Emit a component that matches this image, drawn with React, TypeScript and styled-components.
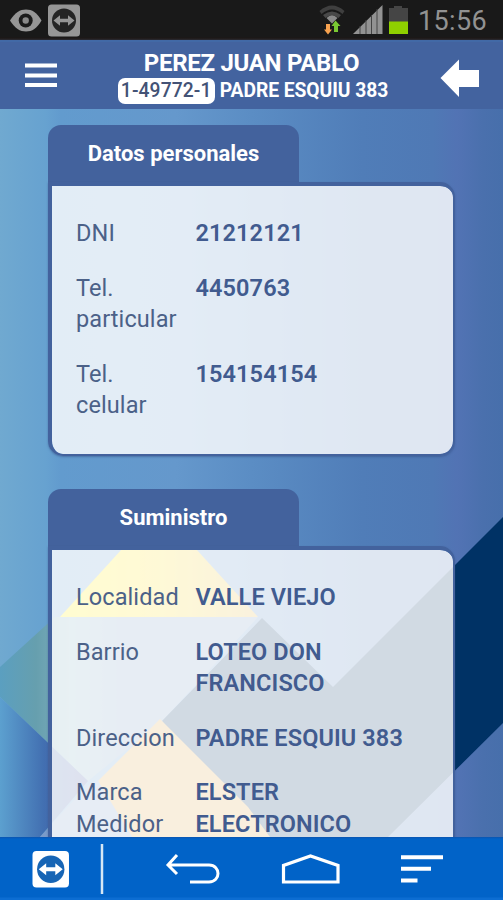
import React from "react";
import styled, { createGlobalStyle } from "styled-components";

const GlobalStyle = createGlobalStyle`
  * { box-sizing: border-box; }
  body { margin: 0; background: #5b8cc4; font-family: Roboto, "Noto Sans", sans-serif; }
`;

const Screen = styled.div`
  width: 503px;
  height: 900px;
  display: flex;
  flex-direction: column;
  overflow: hidden;
`;

const StatusBar = styled.div`
  flex: none;
  height: 40px;
  background: linear-gradient(#191919 0 37px, #1d1715 38px, #2b2c35 40px);
  display: flex;
  align-items: flex-start;
  justify-content: space-between;
`;

const StatusGroup = styled.div<{ $gap?: number }>`
  display: flex;
  align-items: flex-start;
  gap: ${(p) => p.$gap ?? 0}px;
  svg { display: block; }
`;

const Clock = styled.span`
  width: 85px;
  font-size: 27px;
  line-height: 42px;
  letter-spacing: 0.35px;
  color: #929292;
`;

const Header = styled.header`
  flex: none;
  height: 69px;
  background: #43639f;
  border-top: 2px solid #4269a6;
  display: grid;
  grid-template-columns: 100px 1fr 100px;
`;

const IconButton = styled.button<{ $pad: string }>`
  border: 0;
  background: none;
  padding: ${(p) => p.$pad};
  display: flex;
  align-items: flex-start;
`;

const Heading = styled.div`
  display: flex;
  flex-direction: column;
  align-items: center;
  padding-top: 7px;
  color: #fff;
  font-weight: 700;
  white-space: nowrap;
`;

const UserName = styled.div`
  font-size: 24px;
  line-height: 29px;
  letter-spacing: -0.3px;
`;

const Supply = styled.div`
  display: flex;
  align-items: center;
  gap: 5px;
  font-size: 19.3px;
  line-height: 26px;
  margin-left: 3px;
`;

const SupplyNumber = styled.span`
  height: 26px;
  width: 97px;
  border-radius: 7px;
  background: #fff;
  color: #435275;
  font-weight: 500;
  letter-spacing: 0.1px;
  text-align: center;
`;

const Address = styled.span`
  height: 26px;
  letter-spacing: -0.05px;
`;

const Content = styled.main`
  flex: 1;
  min-height: 0;
  position: relative;
  overflow: hidden;
  padding: 16px 48px 0;
`;

const Backdrop = styled.svg`
  position: absolute;
  inset: 0;
  z-index: -1;
`;

const Card = styled.section`
  width: 407px;
  margin-bottom: 33px;
`;

const Tab = styled.h2`
  margin: 0;
  width: 251px;
  height: 57px;
  border-radius: 13px 13px 0 0;
  background: #43629d;
  color: #fff;
  font-size: 22px;
  font-weight: 700;
  line-height: 57px;
  text-align: center;
`;

const Panel = styled.div<{ $height: number }>`
  height: ${(p) => p.$height}px;
  border: solid #43629d;
  border-width: 4px 2px 2px 4px;
  border-radius: 0 15px 15px 15px;
  background: rgba(255, 255, 255, 0.82);
  background-clip: padding-box;
  box-shadow: 0 1px 2px rgba(50, 75, 130, 0.5);
  padding: 32px 20px 0 24px;
  display: flex;
  flex-direction: column;
  gap: 23px;
`;

const Row = styled.div`
  display: grid;
  grid-template-columns: 119.5px 1fr;
  font-size: 23.5px;
  line-height: 31.6px;
  letter-spacing: 0.1px;
  color: #4b6188;
`;

const Label = styled.div`
  padding-right: 14px;
`;

const Value = styled.div`
  font-weight: 600;
  color: #415b8f;
  white-space: pre-line;
`;

const NavBar = styled.nav`
  flex: none;
  height: 63px;
  background: linear-gradient(#0b55b0 0, #0163c8 2px 60px, #0c6dd2 61px);
  svg { display: block; }
`;

const Eye = () => (
  <svg width="42" height="40" viewBox="0 0 42 40">
    <path d="M10 20.500C15 12.500 20 9.500 26 9.500S37 12.500 41.500 20.500C37 28.500 32 31.500 26 31.500S15 28.500 10 20.500Z" fill="#969696" />
    <circle cx="25.700" cy="20.500" r="7" fill="#1b1b1b" />
    <circle cx="25.700" cy="20.500" r="3.200" fill="#8a8a8a" />
  </svg>
);

const RemoteIcon = ({ box, disc }: { box: string; disc: string }) => (
  <g>
    <rect width="32" height="32" rx="3.500" fill={box} />
    <circle cx="16" cy="16" r="12" fill={disc} />
    <path d="M5.500 16L12 10.800V14.300H20V10.800L26.500 16L20 21.200V17.700H12V21.200Z" fill={box} />
  </g>
);

const Wifi = () => (
  <svg width="32" height="40" viewBox="0 0 32 40">
    <path d="M2.500 11Q15 0 27.500 11L25.500 14Q15 5 4.500 14Z" fill="#3f3f3f" />
    <path d="M6 15Q15 8 24 15L21.500 18Q15 12.500 8.500 18Z" fill="#484848" />
    <path d="M9.500 18Q15 12.500 20.500 18L15 23.500Z" fill="#8a8a8a" />
    <path d="M9 24h4v5.500h2L11 34.500L7 29.500h2Z" fill="#f7a24f" />
    <path d="M17 32h4V26h2.500L18.500 20.500L14.500 26H17Z" fill="#79c832" />
  </svg>
);

const Signal = () => (
  <svg width="32" height="40" viewBox="0 0 32 40">
    <path d="M0 34L29.500 5V34Z" fill="#929292" />
    <path d="M7 26V34M13 20V34M18.500 15V34M24 9V34" stroke="#444" strokeWidth="1" />
  </svg>
);

const Battery = () => (
  <svg width="25" height="40" viewBox="0 0 25 40">
    <path d="M0 8h5V6h8v2h6v14H0Z" fill="#454545" />
    <rect y="21.500" width="19" height="12.500" fill="#8fd000" />
  </svg>
);

const BackgroundArt = () => (
  <Backdrop width="503" height="728" viewBox="0 109 503 728" preserveAspectRatio="none">
    <defs>
      <linearGradient id="sky">
        <stop offset="0" stopColor="#70a9d0" />
        <stop offset=".09" stopColor="#67a2d0" />
        <stop offset=".12" stopColor="#629bce" />
        <stop offset=".35" stopColor="#6598cc" />
        <stop offset=".5" stopColor="#5b8dc4" />
        <stop offset=".72" stopColor="#507db8" />
        <stop offset=".86" stopColor="#4f79b5" />
        <stop offset=".91" stopColor="#5273b4" />
        <stop offset=".96" stopColor="#4a70ad" />
        <stop offset="1" stopColor="#476fab" />
      </linearGradient>
      <linearGradient id="leaf" gradientUnits="userSpaceOnUse" x1="0" y1="0" x2="120" y2="0">
        <stop offset="0" stopColor="#5b9fc0" />
        <stop offset=".3" stopColor="#669fae" />
        <stop offset=".6" stopColor="#82b0c0" />
        <stop offset="1" stopColor="#7b9cc0" />
      </linearGradient>
      <linearGradient id="dusk" gradientUnits="userSpaceOnUse" x1="0" y1="0" x2="88" y2="0">
        <stop offset="0" stopColor="#5ca0cf" />
        <stop offset=".5" stopColor="#426fb1" />
        <stop offset="1" stopColor="#4a5da5" />
      </linearGradient>
      <linearGradient id="sun" x1="0" x2="1">
        <stop offset="0" stopColor="#fff000" />
        <stop offset=".5" stopColor="#fadc20" />
        <stop offset="1" stopColor="#dfb448" />
      </linearGradient>
    </defs>
    <rect y="109" width="503" height="728" fill="url(#sky)" />
    <path d="M0 667L55 617H258L162 721L88 781L0 697Z" fill="url(#leaf)" />
    <path d="M0 697L88 781L40 837H0Z" fill="url(#dusk)" />
    <path d="M60 617L122 549L148 525L196 549L258 617Z" fill="url(#sun)" />
    <path d="M503 517L333 687L262 618L162 721L255 837H388L503 723Z" fill="#003265" />
    <path d="M160 719L98 781L132 837H270L248 807Z" fill="#dfa548" />
    <path d="M40 837L88 785L98 781L132 837Z" fill="#7b9bc9" />
  </Backdrop>
);

const personal = [
  ["DNI", "21212121"],
  ["Tel. particular", "4450763"],
  ["Tel. celular", "154154154"],
];

const supply = [
  ["Localidad", "VALLE VIEJO"],
  ["Barrio", "LOTEO DON\nFRANCISCO"],
  ["Direccion", "PADRE ESQUIU 383"],
  ["Marca Medidor", "ELSTER\nELECTRONICO"],
];

const InfoCard = ({ title, rows, height }: { title: string; rows: string[][]; height: number }) => (
  <Card>
    <Tab>{title}</Tab>
    <Panel $height={height}>
      {rows.map(([label, value]) => (
        <Row key={label}>
          <Label>{label}</Label>
          <Value>{value}</Value>
        </Row>
      ))}
    </Panel>
  </Card>
);

export default function App() {
  return (
    <>
      <GlobalStyle />
      <Screen>
        <StatusBar>
          <StatusGroup>
            <Eye />
            <svg width="44" height="40" viewBox="-6 -4.500 44 40">
              <RemoteIcon box="#969696" disc="#242424" />
            </svg>
          </StatusGroup>
          <StatusGroup $gap={4}>
            <Wifi />
            <Signal />
            <Battery />
            <Clock>15:56</Clock>
          </StatusGroup>
        </StatusBar>
        <Header>
          <IconButton $pad="21px 0 0 25px" aria-label="Menu">
            <svg width="33" height="26" viewBox="0 0 33 26">
              <path d="M0 2.500H32M0 12.500H32M0 22H32" stroke="#fff" strokeWidth="4" />
            </svg>
          </IconButton>
          <Heading>
            <UserName>PEREZ JUAN PABLO</UserName>
            <Supply>
              <SupplyNumber>1-49772-1</SupplyNumber>
              <Address>PADRE ESQUIU 383</Address>
            </Supply>
          </Heading>
          <IconButton $pad="17px 0 0 37px" aria-label="Volver">
            <svg width="40" height="40" viewBox="0 0 40 40">
              <path d="M0.500 19L19 0.500V11H39V28H19V38Z" fill="#fff" />
            </svg>
          </IconButton>
        </Header>
        <Content>
          <BackgroundArt />
          <InfoCard title="Datos personales" rows={personal} height={274} />
          <InfoCard title="Suministro" rows={supply} height={360} />
        </Content>
        <NavBar>
          <svg width="503" height="63" viewBox="0 837 503 63" fill="none" stroke="#fff">
            <g transform="translate(32.500 851) scale(1.14)" stroke="none">
              <RemoteIcon box="#fff" disc="#1765b5" />
            </g>
            <path d="M102 844V894" strokeWidth="2.500" stroke="#d5e7f5" />
            <path d="M177 855L168 865L177 874M168 865H209C221 865 221 882 209 882H190" strokeWidth="3" />
            <path d="M283.500 882V865.500L310.500 856L338 865.500V882Z" strokeWidth="3.200" />
            <path d="M401 857.300H443M401 868.800H431M401 880.500H417.500" strokeWidth="4" />
          </svg>
        </NavBar>
      </Screen>
    </>
  );
}
